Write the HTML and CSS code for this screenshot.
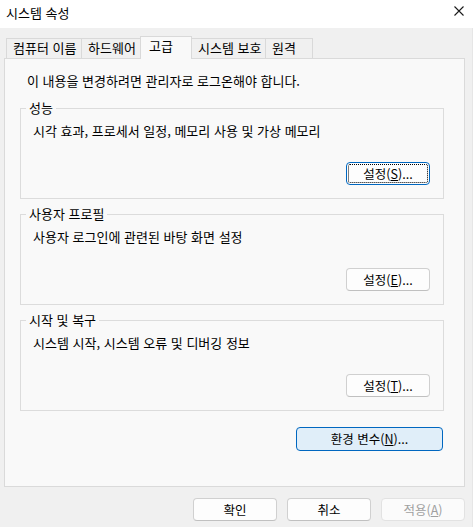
FILE: index.html
```html
<!DOCTYPE html>
<html lang="ko">
<head>
<meta charset="utf-8">
<title>시스템 속성</title>
<link rel="stylesheet" href="styles.css">
</head>
<body>
<div class="window">
  <div class="titlebar">
    <span class="title">시스템 속성</span>
    <svg class="close" width="10" height="10" viewBox="0 0 10 10"><path d="M0.5 0.5 L9.5 9.5 M9.5 0.5 L0.5 9.5" stroke="#1a1a1a" stroke-width="1.1" fill="none"/></svg>
  </div>
  <div class="client">
    <div class="tabs">
      <div class="tab t1">컴퓨터 이름</div>
      <div class="tab t2">하드웨어</div>
      <div class="tab active">고급</div>
      <div class="tab t4">시스템 보호</div>
      <div class="tab t5">원격</div>
    </div>
    <div class="panel">
      <p class="note">이 내용을 변경하려면 관리자로 로그온해야 합니다.</p>
      <fieldset class="group">
        <legend>성능</legend>
        <div class="group-body">
          <p class="desc">시각 효과, 프로세서 일정, 메모리 사용 및 가상 메모리</p>
          <button class="btn focus">설정(<u>S</u>)...</button>
        </div>
      </fieldset>
      <fieldset class="group">
        <legend>사용자 프로필</legend>
        <div class="group-body">
          <p class="desc">사용자 로그인에 관련된 바탕 화면 설정</p>
          <button class="btn">설정(<u>E</u>)...</button>
        </div>
      </fieldset>
      <fieldset class="group">
        <legend>시작 및 복구</legend>
        <div class="group-body">
          <p class="desc">시스템 시작, 시스템 오류 및 디버깅 정보</p>
          <button class="btn">설정(<u>T</u>)...</button>
        </div>
      </fieldset>
      <div class="env-row">
        <button class="btn default env">환경 변수(<u>N</u>)...</button>
      </div>
    </div>
    <div class="footer">
      <button class="btn">확인</button>
      <button class="btn">취소</button>
      <button class="btn disabled">적용(<u>A</u>)</button>
    </div>
  </div>
</div>
</body>
</html>
```
FILE: styles.css
```css
* { box-sizing: border-box; }
html, body { margin: 0; padding: 0; }
body {
  font-family: "Noto Sans CJK KR", "Noto Sans", sans-serif;
  font-size: 13px;
  line-height: 16px;
  color: #000;
  background: #f0f0f0;
}
.window {
  width: 473px;
  height: 527px;
  background: #f0f0f0;
  overflow: hidden;
}
.titlebar {
  height: 28px;
  background: #ffffff;
  display: flex;
  align-items: center;
  justify-content: space-between;
  padding: 0 9px 2px 6px;
}
.title { font-size: 13px; color: #000; }
.close { display: block; margin-top: -4px; }
.client {
  padding-top: 8px;
  height: 499px;
  border-right: 1px solid #e6e6e6;
}
.tabs {
  display: flex;
  align-items: flex-end;
  height: 23px;
  margin-left: 6px;
  margin-bottom: -1px;
  position: relative;
  z-index: 1;
  font-size: 13px;
}
.tab {
  height: 20px;
  margin-bottom: 1px;
  border: 1px solid #d9d9d9;
  border-bottom: none;
  background: #f0f0f0;
  padding: 1px 0 0 6px;
  white-space: nowrap;
}
.tab + .tab { margin-left: -1px; }
.t1 { width: 76px; }
.t2 { width: 60px; }
.tab.active {
  width: 52px;
  height: 23px;
  margin-bottom: 0;
  background: #f9f9f9;
  padding: 1px 0 0 8px;
  position: relative;
  z-index: 2;
}
.t4 { width: 75px; }
.t5 { width: 48px; }
.panel {
  margin-left: 4px;
  width: 461px;
  height: 429px;
  border: 1px solid #dadada;
  background: #f9f9f9;
  padding: 14px 20px 0 15px;
}
.note { margin: 0 0 0 7px; }
.group {
  margin: 11px 0 0;
  border: 1px solid #dcdcdc;
  padding: 7px 13px 13px 12px;
  min-width: 0;
}
.group + .group { margin-top: 7px; }
.group legend {
  padding: 0 3px;
  margin-left: -7px;
}
.group-body {
  display: flex;
  flex-direction: column;
}
.desc { margin: 0; }
.group .btn {
  align-self: flex-end;
  margin-top: 23px;
}
.btn {
  width: 84px;
  height: 23px;
  padding: 0;
  font-family: inherit;
  font-size: 12.5px;
  line-height: 16px;
  color: #000;
  background: #fdfdfd;
  border: 1px solid #d0d0d0;
  border-bottom-color: #c0c0c0;
  border-radius: 4px;
}
.btn.focus {
  border-color: #0067c0;
  outline: 1px dotted #000;
  outline-offset: -3px;
}
.btn.default {
  background: #e0eef9;
  border-color: #0067c0;
}
.btn.disabled {
  color: #a0a0a0;
  background: #fbfbfb;
  border-color: #e2e2e2;
}
.env-row {
  display: flex;
  justify-content: flex-end;
  margin-top: 16px;
  padding-right: 1px;
}
.btn.env { width: 147px; height: 24px; }
.footer {
  display: flex;
  justify-content: flex-end;
  gap: 10px;
  padding: 11px 7px 0 0;
}
```
